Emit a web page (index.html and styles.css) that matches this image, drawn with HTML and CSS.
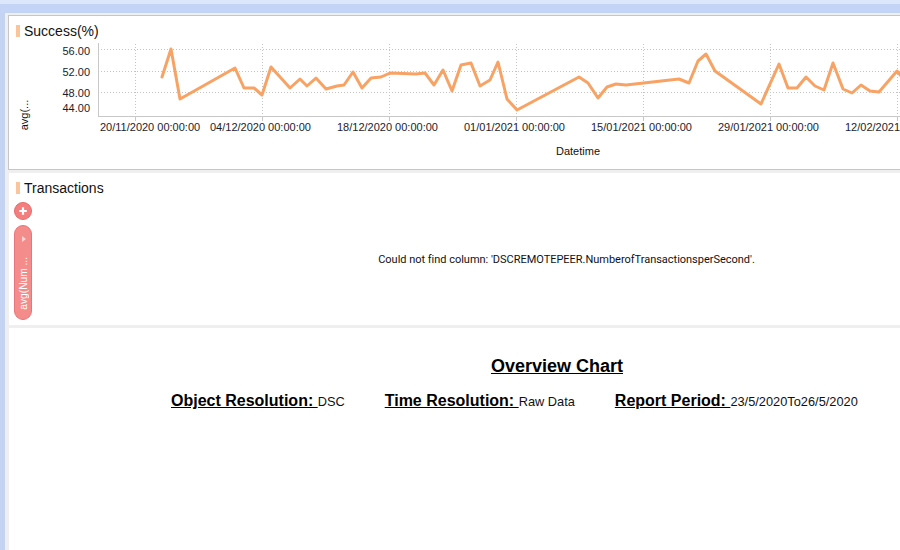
FILE: index.html
```html
<!DOCTYPE html>
<html lang="en">
<head>
<meta charset="utf-8">
<title>Overview Chart</title>
<link rel="stylesheet" href="styles.css">
</head>
<body>
<div class="app">
  <div class="topbar"><div class="topbar-hi"></div><div class="topbar-lo"></div></div>
  <div class="main">
    <div class="sidebar"></div>
    <div class="content">
      <section class="panel panel-chart">
        <div class="panel-title"><span class="title-bar"></span><span>Success(%)</span></div>
        <svg class="chart" width="1096" height="130" viewBox="9 39 1096 130">
          <g class="grid">
            <line x1="98" y1="49.5" x2="1105" y2="49.5"/>
            <line x1="98" y1="71.5" x2="1105" y2="71.5"/>
            <line x1="98" y1="92.5" x2="1105" y2="92.5"/>
            <line x1="135.5" y1="44" x2="135.5" y2="116"/>
            <line x1="262.5" y1="44" x2="262.5" y2="116"/>
            <line x1="389.5" y1="44" x2="389.5" y2="116"/>
            <line x1="516.5" y1="44" x2="516.5" y2="116"/>
            <line x1="643.5" y1="44" x2="643.5" y2="116"/>
            <line x1="770.5" y1="44" x2="770.5" y2="116"/>
            <line x1="897.5" y1="44" x2="897.5" y2="116"/>
          </g>
          <g class="axis">
            <line x1="98.5" y1="43" x2="98.5" y2="117"/>
            <line x1="98" y1="116.5" x2="1105" y2="116.5"/>
            <line x1="135.5" y1="116" x2="135.5" y2="121"/>
            <line x1="262.5" y1="116" x2="262.5" y2="121"/>
            <line x1="389.5" y1="116" x2="389.5" y2="121"/>
            <line x1="516.5" y1="116" x2="516.5" y2="121"/>
            <line x1="643.5" y1="116" x2="643.5" y2="121"/>
            <line x1="770.5" y1="116" x2="770.5" y2="121"/>
            <line x1="897.5" y1="116" x2="897.5" y2="121"/>
          </g>
          <g class="tick-label y-labels">
            <text x="90" y="55">56.00</text>
            <text x="90" y="76">52.00</text>
            <text x="90" y="97">48.00</text>
            <text x="90" y="112">44.00</text>
          </g>
          <g class="tick-label">
            <text x="100" y="131">20/11/2020 00:00:00</text>
            <text x="210" y="131">04/12/2020 00:00:00</text>
            <text x="337" y="131">18/12/2020 00:00:00</text>
            <text x="464" y="131">01/01/2021 00:00:00</text>
            <text x="591" y="131">15/01/2021 00:00:00</text>
            <text x="718" y="131">29/01/2021 00:00:00</text>
            <text x="845" y="131">12/02/2021 00:00:00</text>
          </g>
          <text class="axis-title" x="556" y="155">Datetime</text>
          <text class="axis-title y-title" transform="translate(28,115) rotate(-90)">avg(...</text>
          <polyline class="series" points="162,77 171,49 180,99 235,68 244,88 254,88 262,95 271,67 290,88 300,79 307,86 316,78 326,89 337,86 344,85 353,72 362,88 371,78 381,77 390,73 416,74 425,73 434,85 443,70 452,91 461,65 471,63 480,86 490,80 498,62 507,99 517,110 579,77 588,83 598,98 607,87 616,84 626,85 679,79 689,83 698,61 706,54 715,71 761,104 779,64 788,88 797,88 806,77 815,86 824,90 833,63 843,89 852,93 861,85 870,91 879,92 897,71 906,82"/>
        </svg>
      </section>
      <section class="panel panel-tx">
        <div class="panel-title"><span class="title-bar"></span><span>Transactions</span></div>
        <div class="tx-body">
          <div class="tx-tools">
            <button class="add-btn" type="button" aria-label="Add">
              <svg width="18" height="18" viewBox="0 0 18 18"><circle cx="9" cy="9" r="8.5" class="add-circle"/><path d="M9 5.2V12.8M5.2 9H12.8" class="add-plus"/></svg>
            </button>
            <div class="measure-pill">
              <span class="pill-arrow"></span>
              <span class="pill-text">avg(Num ...</span>
            </div>
          </div>
          <div class="tx-message">Could not find column: 'DSCREMOTEPEER.NumberofTransactionsperSecond'.</div>
        </div>
      </section>
      <section class="panel panel-report">
        <h2 class="report-title">Overview Chart</h2>
        <div class="report-meta">
          <div class="meta-item"><span class="meta-label">Object Resolution: </span><span class="meta-value">DSC</span></div>
          <div class="meta-item"><span class="meta-label">Time Resolution: </span><span class="meta-value">Raw Data</span></div>
          <div class="meta-item"><span class="meta-label">Report Period: </span><span class="meta-value">23/5/2020To26/5/2020</span></div>
        </div>
      </section>
    </div>
  </div>
</div>
</body>
</html>
```

FILE: styles.css
```css
html, body {
  margin: 0;
  padding: 0;
  overflow: hidden;
  background: #efefef;
}

body {
  font-family: "Liberation Sans", Arial, sans-serif;
  color: #111;
}

.app {
  width: 1120px;
  height: 550px;
  display: flex;
  flex-direction: column;
}

.topbar {
  flex: none;
}

.topbar-hi {
  height: 4px;
  background: #dde7fc;
}

.topbar-lo {
  height: 9px;
  background: #c4d4f6;
}

.main {
  flex: 1;
  display: flex;
  min-height: 0;
}

.sidebar {
  width: 5px;
  flex: none;
  background: #c5d3f3;
}

.content {
  flex: 1;
  padding: 2px 0 0 3px;
  display: flex;
  flex-direction: column;
  min-height: 0;
}

.panel {
  width: 1096px;
  background: #fff;
  border: 1px solid #efefef;
  flex: none;
}

.panel-chart {
  border-color: #c6c6c6;
  height: 153px;
  margin-bottom: 2px;
}

.panel-tx {
  height: 152px;
  margin-bottom: 1px;
  display: flex;
  flex-direction: column;
}

.panel-report {
  height: 320px;
}

.panel-title {
  display: flex;
  align-items: center;
  padding: 7px 0 0 7px;
  height: 16px;
  font-size: 14px;
  line-height: 16px;
  color: #111;
}

.title-bar {
  width: 4px;
  height: 12px;
  background: #fbc59b;
  margin-right: 4px;
  flex: none;
}

.chart {
  display: block;
}

.grid line {
  stroke: #c4c4c4;
  stroke-width: 1;
  stroke-dasharray: 1 2;
}

.axis line {
  stroke: #c8c8c8;
  stroke-width: 1;
}

.tick-label text {
  font-family: "Liberation Sans", Arial, sans-serif;
  font-size: 11px;
  fill: #1c1c2c;
}

.y-labels text {
  text-anchor: end;
}

.axis-title {
  font-family: "Liberation Sans", Arial, sans-serif;
  font-size: 11px;
  fill: #111;
}

.y-title {
  text-anchor: middle;
}

.series {
  fill: none;
  stroke: #f8a264;
  stroke-width: 3;
  stroke-linejoin: round;
  stroke-linecap: round;
}

.tx-body {
  flex: 1;
  display: flex;
  min-height: 0;
}

.tx-tools {
  width: 18px;
  padding: 6px 0 0 5px;
  display: flex;
  flex-direction: column;
  gap: 5px;
}

.add-btn {
  width: 18px;
  height: 18px;
  padding: 0;
  border: 0;
  background: none;
  display: block;
}

.add-btn svg {
  display: block;
}

.add-circle {
  fill: #f47e7e;
  stroke: #e56b6b;
  stroke-width: 1;
}

.add-plus {
  stroke: #fff;
  stroke-width: 2.2;
  fill: none;
}

.measure-pill {
  box-sizing: border-box;
  width: 18px;
  height: 95px;
  border-radius: 9px;
  background: #f48c8c;
  border: 1px solid #e97676;
  display: flex;
  flex-direction: column;
  align-items: center;
}

.pill-arrow {
  width: 0;
  height: 0;
  margin: 10px 0 0 2px;
  border-left: 4px solid #fbd2d2;
  border-top: 3px solid transparent;
  border-bottom: 3px solid transparent;
}

.pill-text {
  margin-top: 15px;
  writing-mode: vertical-rl;
  transform: rotate(180deg);
  font-size: 10.2px;
  line-height: 12px;
  color: #fff;
  white-space: nowrap;
  margin-left: 2px;
}

.tx-message {
  flex: 1;
  display: flex;
  align-items: center;
  justify-content: center;
  padding-right: 4px;
  padding-bottom: 3px;
  font-family: Roboto, "Liberation Sans", sans-serif;
  font-size: 11px;
  letter-spacing: -0.02px;
  color: #111;
  white-space: nowrap;
}

.report-title {
  margin: 0;
  padding-top: 27px;
  font-size: 18px;
  line-height: 22px;
  font-weight: 700;
  text-align: center;
  text-decoration: underline;
  color: #000;
}

.report-meta {
  display: flex;
  align-items: baseline;
  gap: 40px;
  margin-top: 14px;
  padding-left: 162px;
  white-space: nowrap;
}

.meta-item {
  display: flex;
  align-items: baseline;
}

.meta-label {
  font-size: 16px;
  line-height: 20px;
  font-weight: 700;
  text-decoration: underline;
  white-space: pre;
  color: #000;
}

.meta-value {
  font-size: 12.8px;
  color: #111;
}
```
